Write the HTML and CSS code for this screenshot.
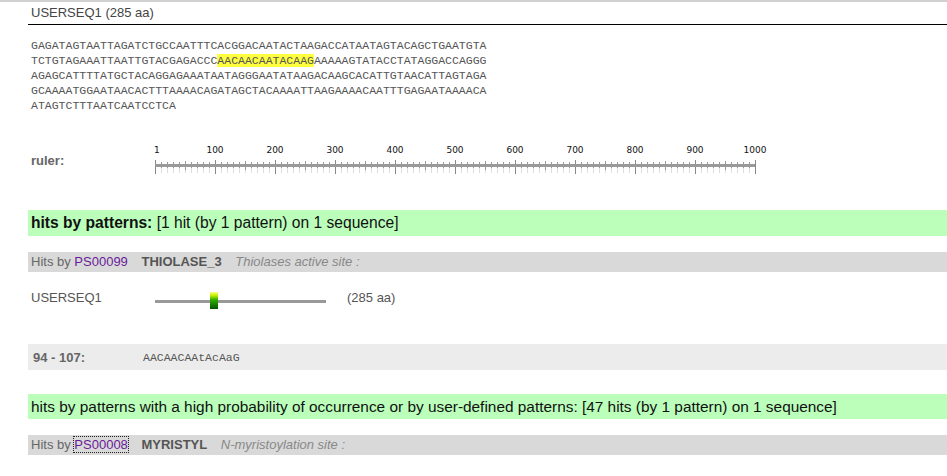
FILE: index.html
```html
<!DOCTYPE html>
<html>
<head>
	<title>ScanProsite results</title>
	<meta charset="UTF-8">
	<link rel="stylesheet" href="styles.css">
</head>
<body>
	<div class="frame">
		<div class="seqhead">USERSEQ1 (285 aa)</div>
		<div class="seq">
			<div class="seq_line">GAGATAGTAATTAGATCTGCCAATTTCACGGACAATACTAAGACCATAATAGTACAGCTGAATGTA</div>
			<div class="seq_line"><span>TCTGTAGAAATTAATTGTACGAGACCC</span><span class="hl">AACAACAATACAAG</span><span>AAAAAGTATACCTATAGGACCAGGG</span></div>
			<div class="seq_line">AGAGCATTTTATGCTACAGGAGAAATAATAGGGAATATAAGACAAGCACATTGTAACATTAGTAGA</div>
			<div class="seq_line">GCAAAATGGAATAACACTTTAAAACAGATAGCTACAAAATTAAGAAAACAATTTGAGAATAAAACA</div>
			<div class="seq_line">ATAGTCTTTAATCAATCCTCA</div>
		</div>

		<div class="ruler_row">
			<span class="ruler_label">ruler:</span>
			<svg class="ruler" width="620" height="40">
				<defs>
					<pattern id="minor" x="5" y="0" width="6" height="40" patternUnits="userSpaceOnUse">
						<rect x="0" y="22" width="1" height="6" fill="#999"/>
						<rect x="0" y="28" width="1" height="5" fill="#ddd"/>
					</pattern>
					<pattern id="major" x="5" y="0" width="60" height="40" patternUnits="userSpaceOnUse">
						<rect x="0" y="20" width="1" height="14" fill="#888"/>
						<rect x="30" y="21" width="1" height="9" fill="#999"/>
					</pattern>
				</defs>
				<rect x="5" y="0" width="601" height="40" fill="url(#minor)"/>
				<rect x="5" y="0" width="601" height="40" fill="url(#major)"/>
				<rect x="5" y="24" width="600" height="3" fill="#999"/>
				<g class="ruler_num">
					<text x="4" y="13">1</text>
					<text x="65" y="13" text-anchor="middle">100</text>
					<text x="125" y="13" text-anchor="middle">200</text>
					<text x="185" y="13" text-anchor="middle">300</text>
					<text x="245" y="13" text-anchor="middle">400</text>
					<text x="305" y="13" text-anchor="middle">500</text>
					<text x="365" y="13" text-anchor="middle">600</text>
					<text x="425" y="13" text-anchor="middle">700</text>
					<text x="485" y="13" text-anchor="middle">800</text>
					<text x="545" y="13" text-anchor="middle">900</text>
					<text x="605" y="13" text-anchor="middle">1000</text>
				</g>
			</svg>
		</div>

		<div class="hits_title first"><b>hits by patterns:</b> [1 hit (by 1 pattern) on 1 sequence]</div>
		<div class="hits_by">Hits by <a href="#">PS00099</a> <b>THIOLASE_3</b> <i>Thiolases active site :</i></div>

		<div class="seq_row">
			<span class="seq_name">USERSEQ1</span>
			<svg class="track" width="175" height="24">
				<defs>
					<linearGradient id="hitgrad" x1="0" y1="0" x2="0" y2="1">
						<stop offset="0" stop-color="#ffff88"/>
						<stop offset="0.2" stop-color="#c8f000"/>
						<stop offset="0.45" stop-color="#33b000"/>
						<stop offset="1" stop-color="#005500"/>
					</linearGradient>
				</defs>
				<rect x="0" y="15" width="171" height="3" fill="#999"/>
				<rect x="55" y="7" width="8" height="17" fill="url(#hitgrad)"/>
			</svg>
			<span class="seq_len">(285 aa)</span>
		</div>

		<div class="match">
			<b>94 - 107:</b>
			<span class="match_seq">AACAACAAtAcAaG</span>
		</div>

		<div class="hits_title">hits by patterns with a high probability of occurrence or by user-defined patterns: [47 hits (by 1 pattern) on 1 sequence]</div>
		<div class="hits_by">Hits by <a href="#" class="focused">PS00008</a> <b>MYRISTYL</b> <i>N-myristoylation site :</i></div>
	</div>
</body>
</html>
```

FILE: styles.css
```css
*{
	margin: 0px;
	padding: 0px;
}
body{
	font-family: "Liberation Sans", Arial, sans-serif;
	font-size: 13px;
	color: #555;
	background-color: white;
	overflow: hidden;
}
.frame{
	border-top: 2px solid #d0d0d0;
	padding-left: 28px;
}
.seqhead{
	height: 22px;
	line-height: 22px;
	padding-left: 3px;
	color: #444;
	border-bottom: 1px solid #000;
}
.seq{
	margin-top: 13px;
	padding-left: 3px;
	font-family: "Liberation Mono", "Courier New", monospace;
	font-size: 11.5px;
	color: #555;
}
.seq_line{
	height: 15px;
	line-height: 15px;
	white-space: pre;
}
.hl{
	background-color: #ffff40;
}
.ruler_row{
	margin-top: 27px;
	height: 40px;
	display: flex;
	align-items: center;
}
.ruler_label{
	width: 119px;
	padding-left: 3px;
	font-weight: bold;
	color: #666;
}
.ruler{
	display: block;
}
.ruler_num{
	font-family: "DejaVu Sans", Verdana, sans-serif;
	font-size: 9px;
	fill: #111;
}
.hits_title{
	margin-top: 24px;
	height: 25px;
	line-height: 25px;
	padding-left: 3px;
	background-color: #bbffbb;
	font-size: 15.4px;
	color: #111;
}
.hits_title.first{
	margin-top: 30px;
	height: 26px;
	line-height: 26px;
	font-size: 15.6px;
}
.hits_by{
	margin-top: 16px;
	height: 20px;
	line-height: 20px;
	padding-left: 3px;
	background-color: #d9d9d9;
	color: #666;
}
.hits_by a{
	color: #6a1b9a;
	text-decoration: none;
}
.hits_by a.focused{
	outline: 1px dotted #222;
}
.hits_by b{
	margin-left: 10px;
	color: #555;
}
.hits_by i{
	margin-left: 10px;
	color: #888;
}
.seq_row{
	margin-top: 13px;
	height: 24px;
	display: flex;
	align-items: center;
}
.seq_name{
	width: 124px;
	padding-left: 3px;
}
.track{
	display: block;
}
.seq_len{
	margin-left: 17px;
}
.match{
	margin-top: 35px;
	height: 26px;
	display: flex;
	align-items: center;
	padding-left: 5px;
	background-color: #ececec;
}
.match b{
	width: 110px;
	color: #666;
}
.match_seq{
	font-family: "Liberation Mono", "Courier New", monospace;
	font-size: 11.5px;
	color: #555;
}
```
